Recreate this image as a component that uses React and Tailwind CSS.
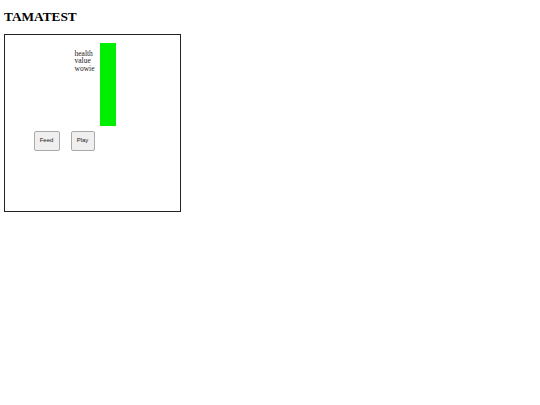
export default function App() {
  return (
    <div className="min-h-screen bg-white pl-[4px] pt-[9px]" style={{ fontFamily: '"Liberation Serif", serif' }}>
      <h1 className="text-[13.3px] leading-[15px] font-bold text-black">TAMATEST</h1>

      {/* pet box */}
      <div className="mt-[10px] w-[177px] h-[178px] border-[1.5px] border-[#222]">
        <div className="flex items-start mt-[7.5px] ml-[69.5px]">
          <div className="w-[25px] mt-[7px] text-[7.5px] leading-[7.5px] text-[#222]">
            <div>health</div>
            <div>value</div>
            <div>wowie</div>
          </div>
          <div className="w-[16px] h-[83px] bg-[#00ee00]" />
        </div>

        <div className="flex mt-[5px] ml-[28.5px] gap-[11px]">
          <button
            className="w-[26px] h-[20.5px] bg-[#efefef] border border-[#aaa] rounded-[2px] text-[6px] text-[#222]"
            style={{ fontFamily: '"Liberation Sans", sans-serif' }}
          >
            Feed
          </button>
          <button
            className="w-[24px] h-[20.5px] bg-[#efefef] border border-[#aaa] rounded-[2px] text-[6px] text-[#222]"
            style={{ fontFamily: '"Liberation Sans", sans-serif' }}
          >
            Play
          </button>
        </div>
      </div>
    </div>
  );
}
